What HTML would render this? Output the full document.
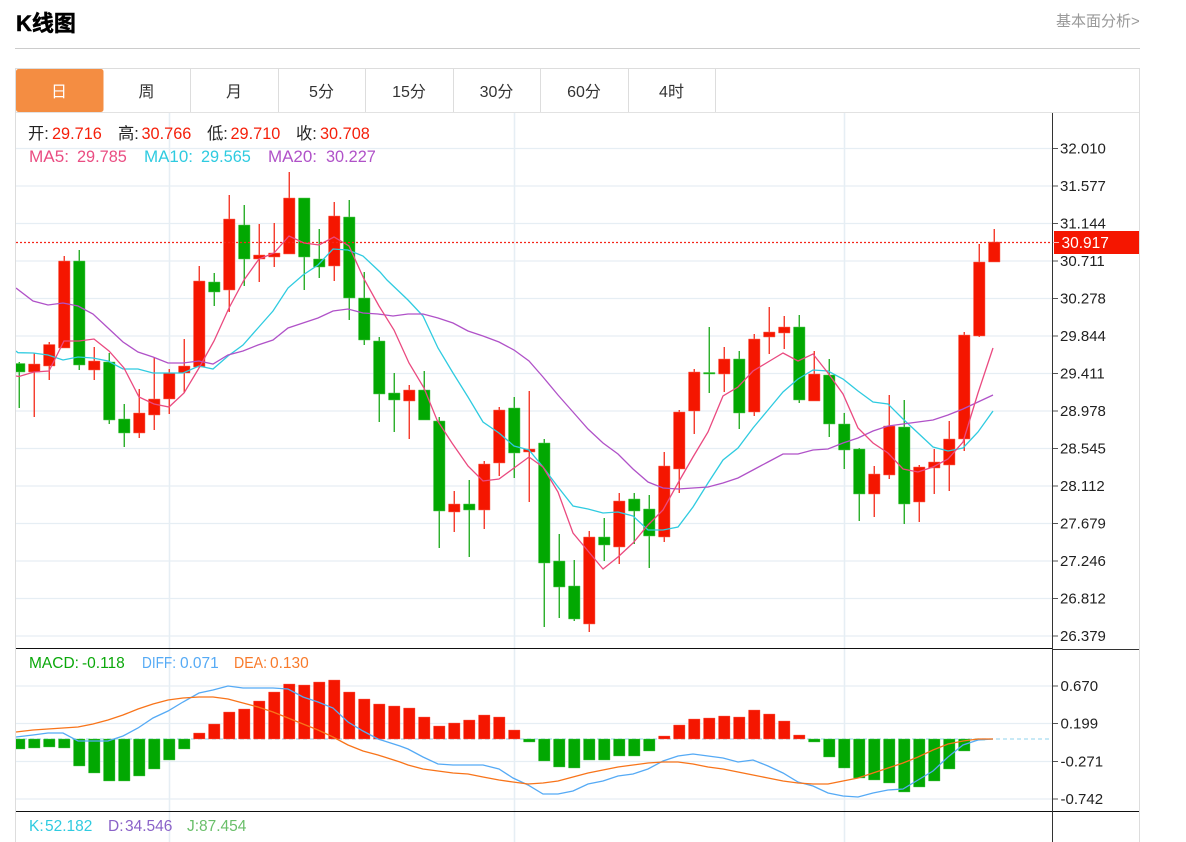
<!DOCTYPE html>
<html lang="zh">
<head>
<meta charset="utf-8">
<title>K线图</title>
<style>
html,body{margin:0;padding:0;background:#fff;width:1186px;height:842px;overflow:hidden}
svg{display:block;position:absolute;left:0;top:0}
text{font-family:"Liberation Sans","Noto Sans CJK SC",sans-serif}
.ax{font-size:15px;fill:#222}
.lg{font-size:16.3px}
.tab{font-size:16px;fill:#333;text-anchor:middle}
.sm{font-size:15.5px}
</style>
</head>
<body>
<svg width="1186" height="842" viewBox="0 0 1186 842" xmlns="http://www.w3.org/2000/svg">
<defs><clipPath id="c"><rect x="16" y="113" width="1036" height="729"/></clipPath></defs>

<text x="16" y="31" font-size="22" font-weight="700" fill="#000" stroke="#000" stroke-width=".5">K线图</text>
<text x="1056" y="26" font-size="15" fill="#999">基本面分析&gt;</text>
<rect x="15" y="48" width="1125" height="1" fill="#ccc"/>

<!-- tabs -->
<path d="M15.5 842V68.5H1139.500V842" fill="none" stroke="#ddd"/>
<rect x="16" y="112" width="1123" height="1" fill="#e2e2e2"/>
<rect x="16" y="69" width="87.500" height="43" rx="2.500" fill="#f48d42"/>
<path d="M190.5 69V112M278.5 69V112M365.5 69V112M453.5 69V112M540.5 69V112M628.5 69V112M715.5 69V112" stroke="#ddd" fill="none"/>
<text class="tab" x="59" y="97" style="fill:#fff">日</text>
<text class="tab" x="146.500" y="97">周</text>
<text class="tab" x="234" y="97">月</text>
<text class="tab" x="321.500" y="97">5分</text>
<text class="tab" x="409" y="97">15分</text>
<text class="tab" x="496.500" y="97">30分</text>
<text class="tab" x="584" y="97">60分</text>
<text class="tab" x="671.500" y="97">4时</text>

<!-- grid -->
<path d="M16 148.5H1052M16 186H1052M16 223.5H1052M16 261H1052M16 298.5H1052M16 336H1052M16 373.5H1052M16 411H1052M16 448.5H1052M16 486H1052M16 523.5H1052M16 561H1052M16 598.5H1052M16 636H1052M16 686H1052M16 723.5H1052M16 761.5H1052M16 799H1052" stroke="#e6eef4" stroke-width="1.3" fill="none"/>
<path d="M169.5 113V842M514.5 113V842M844.5 113V842" stroke="#e6eef4" stroke-width="1.5" fill="none"/>

<g clip-path="url(#c)">
<!-- green wicks -->
<path fill="none" stroke="#18a818" stroke-width="1.3" d="M19.25 362V408M79.25 250V370M109.25 353V424M124.25 404V447M214.25 273V306M244.25 205V286M304.25 198V290M319.25 229V278M349.25 200V320M364.25 272V345M379.25 337V422M394.25 373V432M424.25 371V420M439.25 417V548M469.25 480V557M514.25 397V478M544.25 439V627M559.25 534V618M574.25 560V621M604.25 518V561M634.25 493V544M649.25 495V568M709.25 327V393M739.25 351V429M799.25 315V403M829.25 359V437M844.25 413V469M859.25 448V521M904.25 400V524"/>
<!-- green bodies -->
<path fill="#02a802" stroke="#5cc75c" stroke-width=".5" d="M13.5 363.5h11.5v8.5h-11.5zM73.5 261h11.5v104h-11.5zM103.5 362h11.5v58h-11.5zM118.5 419h11.5v14h-11.5zM208.5 282h11.5v10h-11.5zM238.5 225h11.5v34h-11.5zM298.5 198h11.5v59h-11.5zM313.5 259h11.5v8h-11.5zM343.5 217h11.5v81h-11.5zM358.5 298h11.5v42h-11.5zM373.5 341h11.5v53h-11.5zM388.5 393h11.5v7h-11.5zM418.5 390h11.5v30h-11.5zM433.5 421h11.5v90h-11.5zM463.5 504h11.5v6h-11.5zM508.5 408h11.5v45h-11.5zM538.5 443h11.5v120h-11.5zM553.5 561h11.5v26h-11.5zM568.5 586h11.5v33h-11.5zM598.5 537h11.5v8h-11.5zM628.5 499h11.5v12h-11.5zM643.5 509h11.5v27h-11.5zM703.5 372.5h11.5v1.5h-11.5zM733.5 359h11.5v54h-11.5zM793.5 327h11.5v73h-11.5zM823.5 375h11.5v49h-11.5zM838.5 424h11.5v26h-11.5zM853.5 449h11.5v45h-11.5zM898.5 427h11.5v77h-11.5z"/>
<!-- red wicks -->
<path fill="none" stroke="#f42a1a" stroke-width="1.3" d="M34.25 353V417M49.25 342V380M64.25 256V348M94.25 347V380M139.25 389V438M154.25 357V430M169.25 369V414M184.25 339V393M199.25 266V368M229.25 195V312M259.25 224V282M274.25 223V267M289.25 172V254M334.25 202V281M409.25 385V439M454.25 491V532M484.25 461V529M499.25 407V476M529.25 391V502M589.25 531V632M619.25 493V564M664.25 452V542M679.25 410V493M694.25 369V434M724.25 347V392M754.25 334V416M769.25 307V354M784.25 316V349M814.25 351V401M874.25 466V517M889.25 395V479M919.25 465V522M934.25 449V494M949.25 421V491M964.25 332V451M979.25 244V337M994.25 229V262"/>
<!-- red bodies -->
<path fill="#f51600" stroke="#f87060" stroke-width=".5" d="M28.5 364h11.5v8h-11.5zM43.5 344.5h11.5v21.5h-11.5zM58.5 261h11.5v87h-11.5zM88.5 361h11.5v9h-11.5zM133.5 413h11.5v20h-11.5zM148.5 399h11.5v16h-11.5zM163.5 373h11.5v26h-11.5zM178.5 366h11.5v7h-11.5zM193.5 281h11.5v86h-11.5zM223.5 219h11.5v71h-11.5zM253.5 255h11.5v4h-11.5zM268.5 253h11.5v4h-11.5zM283.5 198h11.5v56h-11.5zM328.5 216h11.5v50h-11.5zM403.5 390h11.5v11h-11.5zM448.5 504h11.5v8h-11.5zM478.5 464h11.5v46h-11.5zM493.5 410h11.5v53h-11.5zM523.5 449h11.5v3h-11.5zM583.5 537h11.5v87h-11.5zM613.5 501h11.5v46h-11.5zM658.5 466h11.5v71h-11.5zM673.5 412h11.5v57h-11.5zM688.5 372h11.5v39h-11.5zM718.5 359h11.5v15h-11.5zM748.5 339h11.5v73h-11.5zM763.5 332h11.5v5h-11.5zM778.5 327h11.5v6h-11.5zM808.5 374h11.5v27h-11.5zM868.5 474h11.5v20h-11.5zM883.5 426h11.5v49h-11.5zM913.5 467h11.5v35h-11.5zM928.5 462h11.5v6h-11.5zM943.5 439h11.5v26h-11.5zM958.5 335h11.5v104h-11.5zM973.5 262h11.5v74h-11.5zM988.5 242h11.5v20h-11.5z"/>

<!-- MA lines -->
<polyline fill="none" stroke="#2fcbe0" stroke-width="1.3" points="16,351 18,352.7 33,353 48,355 63,360 78,357 93,358 108,361 123,369 138,369 153,373 168,373 183,373 199,366 213,369 228,356 243,345 258,328 273,311 288,288 303,275 318,265 333,249 348,250 363,256 380,272 387,280 408,300 423,316 438,348 453,373 468,397 483,422 499,433 514,446 529,450 543,467 558,487 573,506 588,509 603,513 618,512 633,516 648,530 663,530 678,527 693,507 708,483 723,460 738,448 753,428 768,410 783,392 798,379 813,370 828,371 843,379 858,391 873,402 888,404 903,419 918,433 933,447 948,451 963,448 978,432 993,411"/>
<polyline fill="none" stroke="#b052c8" stroke-width="1.3" points="16,288 33,301 48,305 63,303 78,306 93,314 108,328 123,342 138,352 153,357 168,363 183,363 199,361 213,364 228,355 243,351 258,345 273,340 288,328 300,324 318,318 333,311 348,309 363,313 378,314 393,316 408,314 423,314 438,318 453,323 468,331 483,336 499,342 514,350 529,361 543,377 558,395 573,412 588,429 603,443 618,454 633,469 648,482 663,488 678,489 693,488 708,487 723,483 738,478 753,470 768,462 783,454 798,454 813,450 828,449 843,443 858,438 873,431 888,426 903,424 918,422 933,420 948,415 963,409 978,402 993,395"/>
<polyline fill="none" stroke="#ea4a80" stroke-width="1.3" points="16,376 19,376.5 34,372 49,371 64,341 79,341 94,339 109,351 124,368 139,397 154,404 169,407 184,393 199,368 214,341 229,308 244,280 259,259 274,253 289,236 304,243 319,245 334,237 349,246 364,279 379,306 394,330 409,363 424,388 437,420 452,443 468,466 483,481 499,479 514,468 529,457 543,467 558,492 573,533 588,551 603,569 618,557 633,543 648,525 663,510 678,483 693,457 708,432 723,396 738,387 753,371 768,362 783,353 798,361 813,354 828,373 843,394 858,428 873,443 888,453 903,469 918,472 933,467 948,459 963,442 978,393 993,348"/>

<!-- current price line -->
<path d="M16 242.5H1050" stroke="#f5261a" stroke-width="1.2" stroke-dasharray="2 2" fill="none"/>

<!-- MACD -->
<path d="M16 739H1050" stroke="#a8dcf0" stroke-width="1.2" stroke-dasharray="4 3" fill="none"/>
<path fill="#02a802" stroke="#5cc75c" stroke-width=".4" d="M13.5 739h11.5V749h-11.5zM28.5 739h11.5V748h-11.5zM43.5 739h11.5V747h-11.5zM58.5 739h11.5V748h-11.5zM73.5 739h11.5V766h-11.5zM88.5 739h11.5V773h-11.5zM103.5 739h11.5V781h-11.5zM118.5 739h11.5V781h-11.5zM133.5 739h11.5V776h-11.5zM148.5 739h11.5V769h-11.5zM163.5 739h11.5V760h-11.5zM178.5 739h11.5V749h-11.5zM523.5 739h11.5V742h-11.5zM538.5 739h11.5V761h-11.5zM553.5 739h11.5V767h-11.5zM568.5 739h11.5V768h-11.5zM583.5 739h11.5V760h-11.5zM598.5 739h11.5V760h-11.5zM613.5 739h11.5V756h-11.5zM628.5 739h11.5V756h-11.5zM643.5 739h11.5V751h-11.5zM808.5 739h11.5V742h-11.5zM823.5 739h11.5V757h-11.5zM838.5 739h11.5V768h-11.5zM853.5 739h11.5V778h-11.5zM868.5 739h11.5V780h-11.5zM883.5 739h11.5V783h-11.5zM898.5 739h11.5V792h-11.5zM913.5 739h11.5V787h-11.5zM928.5 739h11.5V781h-11.5zM943.5 739h11.5V769h-11.5zM958.5 739h11.5V751h-11.5zM973.5 739h11.5V740h-11.5z"/>
<path fill="#f51600" stroke="#f87060" stroke-width=".4" d="M193.5 739V733h11.5V739zM208.5 739V724h11.5V739zM223.5 739V712h11.5V739zM238.5 739V709h11.5V739zM253.5 739V701h11.5V739zM268.5 739V692h11.5V739zM283.5 739V684h11.5V739zM298.5 739V685h11.5V739zM313.5 739V682h11.5V739zM328.5 739V680h11.5V739zM343.5 739V692h11.5V739zM358.5 739V699h11.5V739zM373.5 739V704h11.5V739zM388.5 739V706h11.5V739zM403.5 739V708h11.5V739zM418.5 739V717h11.5V739zM433.5 739V726h11.5V739zM448.5 739V723h11.5V739zM463.5 739V720h11.5V739zM478.5 739V715h11.5V739zM493.5 739V717h11.5V739zM508.5 739V730h11.5V739zM658.5 739V736h11.5V739zM673.5 739V725h11.5V739zM688.5 739V719h11.5V739zM703.5 739V718h11.5V739zM718.5 739V716h11.5V739zM733.5 739V717h11.5V739zM748.5 739V710h11.5V739zM763.5 739V714h11.5V739zM778.5 739V721h11.5V739zM793.5 739V735h11.5V739z"/>
<polyline fill="none" stroke="#55aaf5" stroke-width="1.3" points="16,737 33,735 48,733 63,733 78,741 93,741 108,741 123,736 138,728 153,718 168,711 183,702 199,693 213,690 228,686 243,688 258,688 273,688 288,689 303,697 318,702 333,708 348,722 363,731 378,739 400,746 408,749 423,757 438,764 453,765 468,765 483,765 499,769 513,778 528,785 543,794 558,794 573,791 588,784 603,781 618,776 633,774 648,769 663,761 678,756 693,754 708,756 723,758 738,762 753,760 768,766 783,773 798,782 813,786 828,793 843,796 858,797 873,793 888,790 903,789 918,780 933,771 948,757 963,745 978,740 993,739"/>
<polyline fill="none" stroke="#f8741a" stroke-width="1.3" points="16,732 33,730 48,729 63,728 78,727 93,724 108,720 123,715 138,709 153,704 168,700 183,698 199,697 213,697 228,699 243,703 258,707 273,712 288,718 303,724 318,730 333,737 348,745 363,751 378,755 400,762 408,765 423,769 438,771 453,773 468,774 483,777 499,780 513,782 528,784 543,783 558,781 573,777 588,773 603,770 618,767 633,765 648,763 663,762 678,762 693,764 708,767 723,769 738,772 753,775 768,778 783,781 798,783 813,784 828,784 843,781 858,778 873,773 888,768 903,763 918,757 933,750 948,744 963,741 978,739 993,739"/>
</g>

<!-- panel separators and axis -->
<rect x="16" y="648" width="1036" height="1" fill="#111"/>
<rect x="1052" y="649" width="87" height="1" fill="#333"/>
<rect x="16" y="811" width="1123" height="1" fill="#111"/>
<rect x="1052" y="113" width="1" height="729" fill="#333"/>
<path d="M1053 148.5h5M1053 186h5M1053 223.5h5M1053 261h5M1053 298.5h5M1053 336h5M1053 373.5h5M1053 411h5M1053 448.5h5M1053 486h5M1053 523.5h5M1053 561h5M1053 598.5h5M1053 636h5M1053 686h5M1053 723.5h5M1053 761.5h5M1053 799h5" stroke="#555" fill="none"/>

<!-- axis labels -->
<text class="ax" x="1060" y="153.500">32.010</text>
<text class="ax" x="1060" y="191">31.577</text>
<text class="ax" x="1060" y="228.500">31.144</text>
<text class="ax" x="1060" y="266">30.711</text>
<text class="ax" x="1060" y="303.500">30.278</text>
<text class="ax" x="1060" y="341">29.844</text>
<text class="ax" x="1060" y="378.500">29.411</text>
<text class="ax" x="1060" y="416">28.978</text>
<text class="ax" x="1060" y="453.500">28.545</text>
<text class="ax" x="1060" y="491">28.112</text>
<text class="ax" x="1060" y="528.500">27.679</text>
<text class="ax" x="1060" y="566">27.246</text>
<text class="ax" x="1060" y="603.500">26.812</text>
<text class="ax" x="1060" y="641">26.379</text>
<text class="ax" x="1060.500" y="691">0.670</text>
<text class="ax" x="1060.500" y="728.500">0.199</text>
<text class="ax" x="1060.500" y="766.500">-0.271</text>
<text class="ax" x="1060.500" y="804">-0.742</text>

<rect x="1054" y="231" width="85" height="23" fill="#f51600"/>
<path d="M1053 242.500h6" stroke="#fbb" fill="none"/>
<text x="1061.500" y="248" font-size="15.500" fill="#fff">30.917</text>

<!-- legend -->
<g class="lg">
<text x="28" y="139" fill="#222">开:</text><text x="52" y="139" fill="#f51f0a">29.716</text>
<text x="118" y="139" fill="#222">高:</text><text x="141.500" y="139" fill="#f51f0a">30.766</text>
<text x="207" y="139" fill="#222">低:</text><text x="230.500" y="139" fill="#f51f0a">29.710</text>
<text x="296" y="139" fill="#222">收:</text><text x="320" y="139" fill="#f51f0a">30.708</text>
<text x="29" y="162" fill="#ea4d82" textLength="40" lengthAdjust="spacingAndGlyphs">MA5:</text><text x="77" y="162" fill="#ea4d82">29.785</text>
<text x="144" y="162" fill="#2fcbe0" textLength="49" lengthAdjust="spacingAndGlyphs">MA10:</text><text x="201" y="162" fill="#2fcbe0">29.565</text>
<text x="268" y="162" fill="#b052c8" textLength="49" lengthAdjust="spacingAndGlyphs">MA20:</text><text x="326" y="162" fill="#b052c8">30.227</text>
</g>
<g class="sm">
<text x="29" y="668" fill="#0aa80a">MACD:</text><text x="82" y="668" fill="#0aa80a">-0.118</text>
<text x="142" y="668" fill="#55aaf5" textLength="34" lengthAdjust="spacingAndGlyphs">DIFF:</text><text x="180" y="668" fill="#55aaf5">0.071</text>
<text x="234" y="668" fill="#f87a2a" textLength="33" lengthAdjust="spacingAndGlyphs">DEA:</text><text x="270" y="668" fill="#f87a2a">0.130</text>
<text x="29" y="831" fill="#2fcbe0">K:</text><text x="45" y="831" fill="#2fcbe0">52.182</text>
<text x="108" y="831" fill="#8a62c8">D:</text><text x="125" y="831" fill="#8a62c8">34.546</text>
<text x="187" y="831" fill="#6abf6a">J:</text><text x="199" y="831" fill="#6abf6a">87.454</text>
</g>
</svg>
</body>
</html>
